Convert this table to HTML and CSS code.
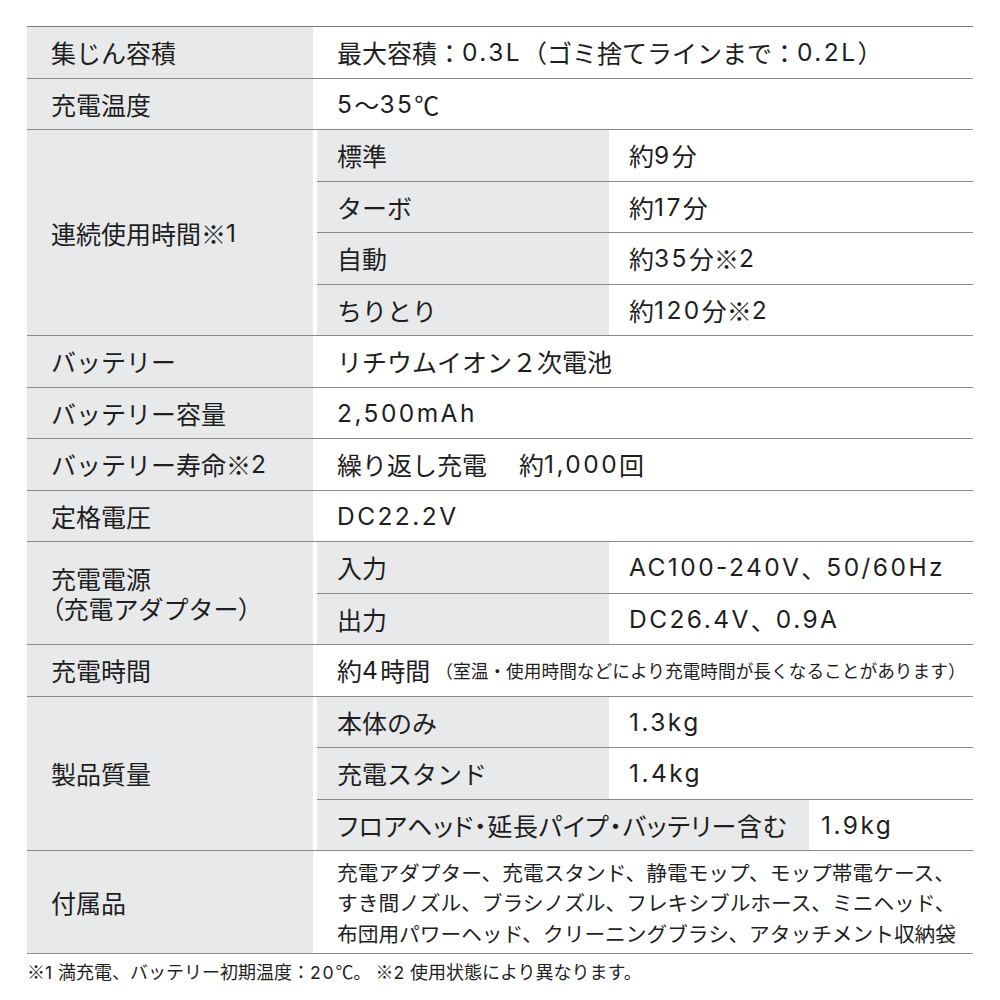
FILE: index.html
```html
<!DOCTYPE html>
<html lang="ja">
<head>
<meta charset="utf-8">
<link rel="stylesheet" href="styles.css">
</head>
<body>
<div class="page">
  <div class="spec">
    <div class="row">
      <div class="label">集じん容積</div>
      <div class="value">最大容積：<span class="en">0.3L</span>（ゴミ捨てラインまで：<span class="en">0.2L</span>）</div>
    </div>
    <div class="row">
      <div class="label">充電温度</div>
      <div class="value"><span class="en">5</span>～<span class="en">35</span>℃</div>
    </div>
    <div class="row">
      <div class="label">連続使用時間※<span class="en">1</span></div>
      <div class="subs">
        <div class="sub"><div class="sublabel">標準</div><div class="subvalue">約<span class="en">9</span>分</div></div>
        <div class="sub"><div class="sublabel">ターボ</div><div class="subvalue">約<span class="en">17</span>分</div></div>
        <div class="sub"><div class="sublabel">自動</div><div class="subvalue">約<span class="en">35</span>分※<span class="en">2</span></div></div>
        <div class="sub"><div class="sublabel">ちりとり</div><div class="subvalue">約<span class="en">120</span>分※<span class="en">2</span></div></div>
      </div>
    </div>
    <div class="row">
      <div class="label">バッテリー</div>
      <div class="value">リチウムイオン２次電池</div>
    </div>
    <div class="row">
      <div class="label">バッテリー容量</div>
      <div class="value"><span class="en">2,500mAh</span></div>
    </div>
    <div class="row">
      <div class="label">バッテリー寿命※<span class="en">2</span></div>
      <div class="value">繰り返し充電<span class="gap"></span>約<span class="en">1,000</span>回</div>
    </div>
    <div class="row">
      <div class="label">定格電圧</div>
      <div class="value"><span class="en">DC22.2V</span></div>
    </div>
    <div class="row">
      <div class="label label-two"><span class="line">充電電源</span><span class="line"><span class="pp">（</span>充電アダプター<span class="pp">）</span></span></div>
      <div class="subs">
        <div class="sub"><div class="sublabel">入力</div><div class="subvalue"><span class="en">AC100-240V</span>、<span class="en">50/60Hz</span></div></div>
        <div class="sub"><div class="sublabel">出力</div><div class="subvalue"><span class="en">DC26.4V</span>、<span class="en">0.9A</span></div></div>
      </div>
    </div>
    <div class="row">
      <div class="label">充電時間</div>
      <div class="value">約<span class="en">4</span>時間<span class="note">（室温・使用時間などにより充電時間が長くなることがあります）</span></div>
    </div>
    <div class="row">
      <div class="label">製品質量</div>
      <div class="subs">
        <div class="sub"><div class="sublabel">本体のみ</div><div class="subvalue"><span class="en">1.3kg</span></div></div>
        <div class="sub"><div class="sublabel">充電スタンド</div><div class="subvalue"><span class="en">1.4kg</span></div></div>
        <div class="sub sub-wide"><div class="sublabel condensed">フロアヘッド・延長パイプ・バッテリー含む</div><div class="subvalue tight"><span class="en">1.9kg</span></div></div>
      </div>
    </div>
    <div class="row row-tall">
      <div class="label">付属品</div>
      <div class="value multi"><span class="line">充電アダプター、充電スタンド、静電モップ、モップ帯電ケース、</span><span class="line">すき間ノズル、ブラシノズル、フレキシブルホース、ミニヘッド、</span><span class="line">布団用パワーヘッド、クリーニングブラシ、アタッチメント収納袋</span></div>
    </div>
  </div>
  <p class="footnote">※<span class="en">1</span> 満充電、バッテリー初期温度：<span class="en">20</span>℃。 ※<span class="en">2</span> 使用状態により異なります。</p>
</div>
</body>
</html>
```
FILE: styles.css
```css
html, body {
  margin: 0;
  padding: 0;
  background: #ffffff;
}

body {
  font-family: "Noto Sans CJK JP", "Noto Sans", sans-serif;
  color: #1e1e1e;
}

.page {
  padding: 26px 27px 0 27px;
}

.spec {
  width: 946px;
  border-bottom: 1px solid #8a8a8a;
  font-size: 25px;
}

.en {
  font-family: Inter, "Liberation Sans", sans-serif;
  font-size: 0.98em;
  letter-spacing: 0.1em;
}

.gap {
  display: inline-block;
  width: 32px;
}

.row {
  display: grid;
  grid-template-columns: 286px 1fr;
  border-top: 1px solid #8a8a8a;
  box-sizing: border-box;
}

.row:first-child {
  border-top-color: #7a7a7a;
}

.label {
  background: #e8e9eb;
  padding-left: 24px;
  display: flex;
  align-items: center;
  min-height: 50.5px;
  line-height: 30px;
}

.label-two {
  flex-direction: column;
  align-items: flex-start;
  justify-content: center;
}

.line {
  display: block;
  line-height: 30px;
  height: 30px;
}

.pp {
  font-feature-settings: "palt" 1;
}

.value {
  padding-left: 24px;
  display: flex;
  align-items: center;
  height: 50.5px;
  line-height: 30px;
  white-space: nowrap;
}

.row-tall .value {
  height: 102px;
}

.multi {
  flex-direction: column;
  align-items: flex-start;
  justify-content: center;
  font-size: 20.7px;
  padding-top: 1px;
  box-sizing: border-box;
}

.multi .line {
  line-height: 30.5px;
  height: 30.5px;
}

.note {
  font-size: 17.7px;
  margin-left: 5px;
}

.subs {
  padding-left: 4px;
  display: flex;
  flex-direction: column;
}

.sub {
  display: grid;
  grid-template-columns: 292px 1fr;
  height: 51.5px;
  border-top: 1px solid #8a8a8a;
  box-sizing: border-box;
}

.sub:first-child {
  border-top: none;
  height: 50.5px;
}

.sub-wide {
  grid-template-columns: 492px 1fr;
}

.sublabel {
  background: #e8e9eb;
  padding-left: 20px;
  display: flex;
  align-items: center;
  white-space: nowrap;
}

.condensed {
  font-feature-settings: "palt" 1;
  letter-spacing: 0.7px;
}

.subvalue {
  padding-left: 20px;
  display: flex;
  align-items: center;
  white-space: nowrap;
}

.subvalue.tight {
  padding-left: 12px;
}

.footnote {
  margin: 5px 0 0 0;
  font-size: 18px;
  line-height: 24px;
}
```
